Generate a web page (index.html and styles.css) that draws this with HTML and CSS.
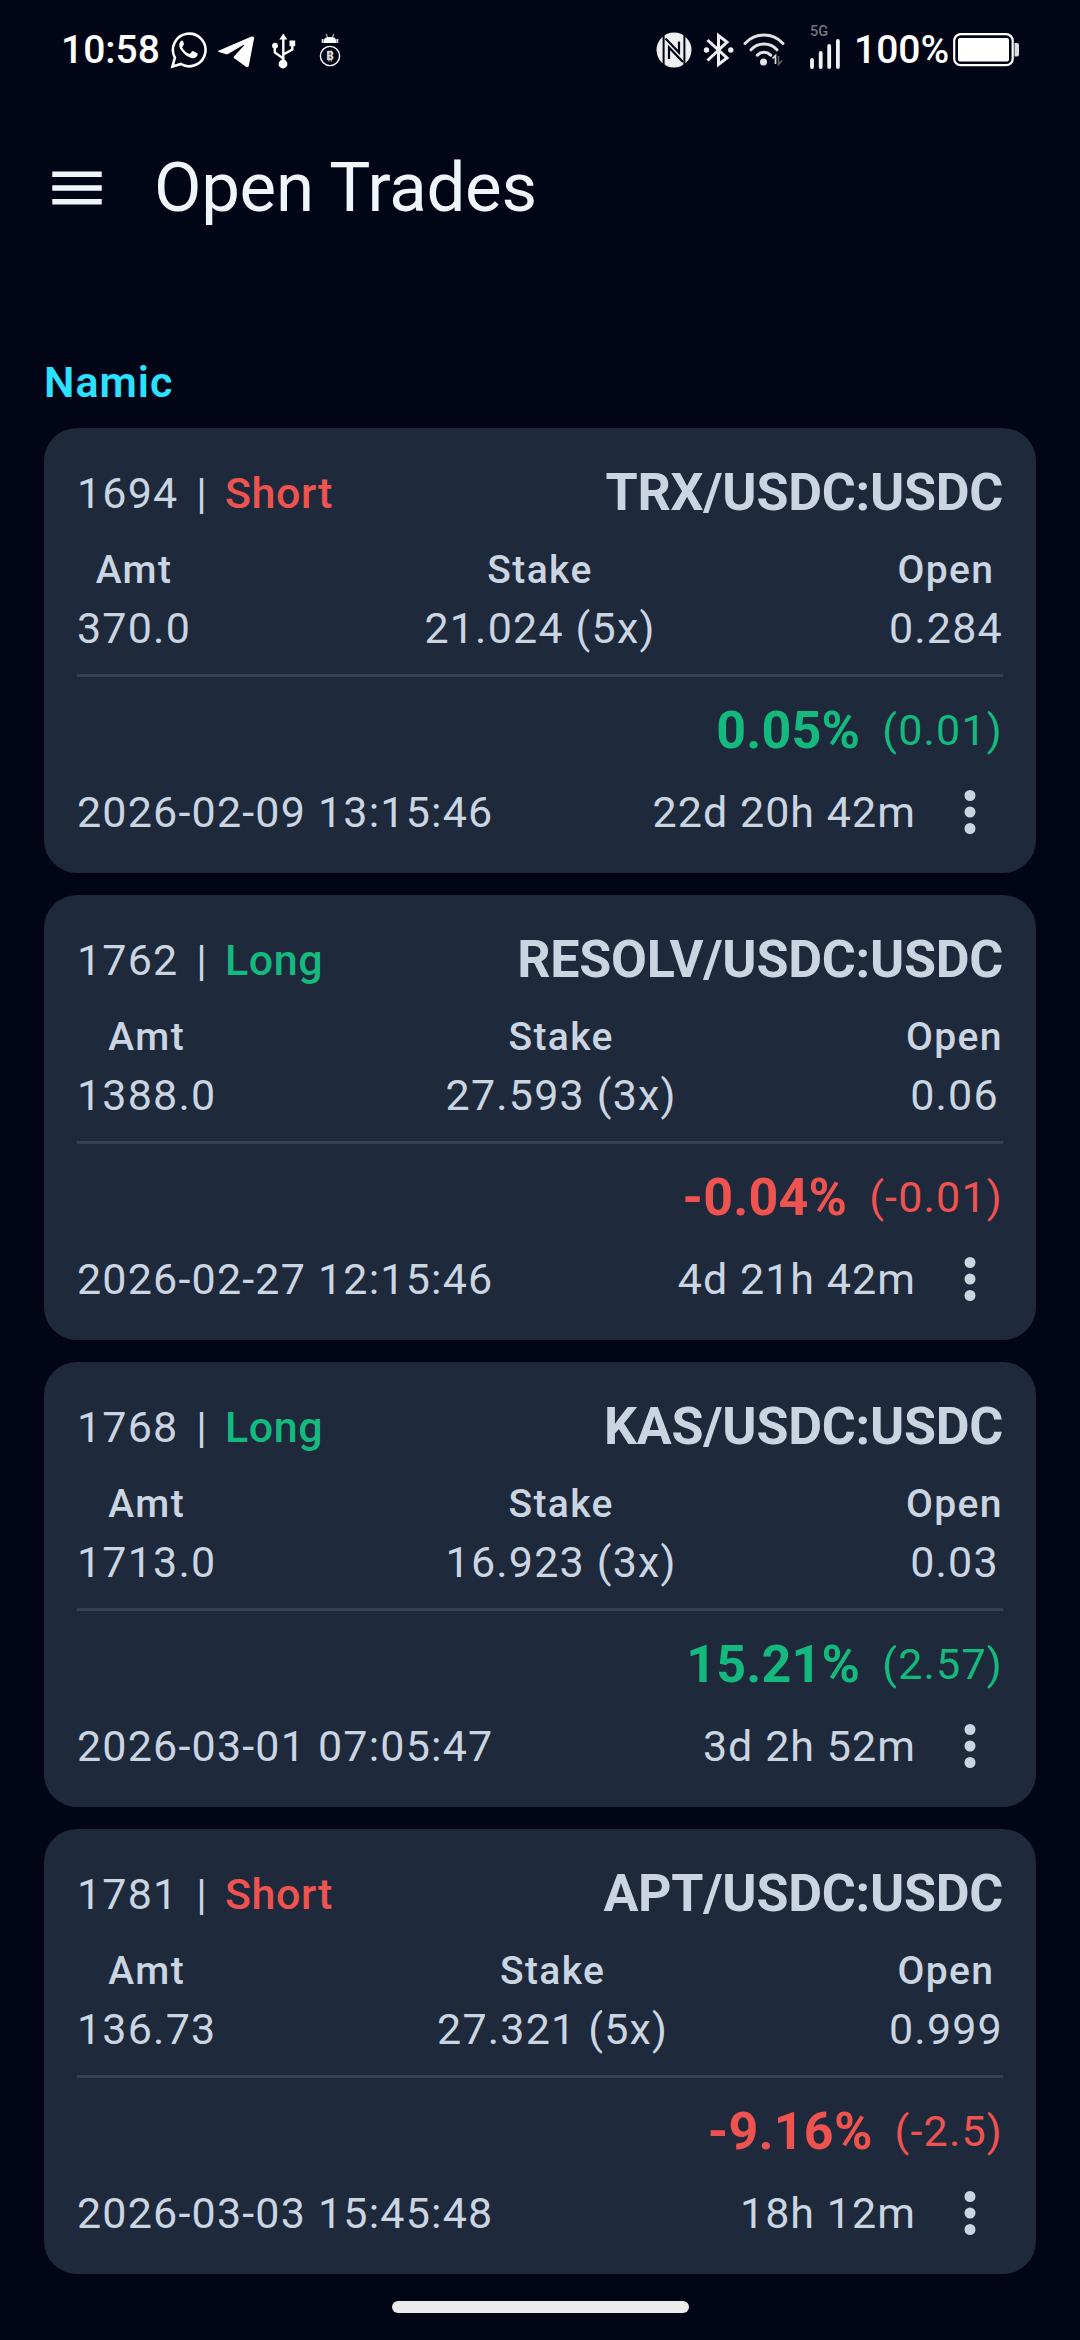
FILE: index.html
```html
<!DOCTYPE html>
<html lang="en">
<head>
    <meta charset="UTF-8">
    <meta name="viewport" content="width=device-width, initial-scale=1.0">
    <title>Open Trades</title>
    <link rel="stylesheet" href="styles.css">
</head>
<body>

    <div class="statusbar">
        <div class="status-left">
            <span class="clock">10:58</span>
            <!-- whatsapp -->
            <svg class="whatsapp" width="38" height="38" viewBox="0 0 38 38">
                <path d="M2.4 35.6l2.5-8.9A16.3 16.3 0 1 1 11 33z" fill="none" stroke="#fff" stroke-width="2.6"/>
                <path d="M13.2 10.2c-.6-1-1.6-.9-2.4 0-2.6 2.8-1.6 6.3.6 9.4 2.6 3.7 5.9 6.3 9.9 7.4 3.2.9 6.3-1 6.4-3.7 0-.8-.3-1-1-1.4l-3.3-1.6c-.8-.4-1.2-.2-1.7.5l-1.3 1.6c-.4.5-.8.5-1.4.3-3-1.3-5.1-3.3-6.6-6-.3-.6-.2-.9.2-1.3l1-1.3c.4-.5.4-.9.2-1.4z" fill="#fff"/>
            </svg>
            <!-- telegram -->
            <svg class="telegram" width="38" height="34" viewBox="0 0 38 34">
                <path d="M1.5 15.8L34.5 1.6c1.7-.6 2.8.2 2.5 2l-5 26.5c-.4 2.1-1.7 2.6-3.4 1.4L17.3 23.2c-.9-.6-.8-1.3-.1-2L27 10.6c.5-.6 0-.9-.7-.5L11 18.9c-.8.5-1.7.5-2.6.2l-6.5-2c-1.1-.3-1.1-.9-.4-1.3z" fill="#fff"/>
            </svg>
            <!-- usb -->
            <svg class="usb" width="24" height="36" viewBox="0 0 24 36">
                <path d="M11.3 30V6M11.3 25.5L2.8 19.5V12M11.3 21.5l9-5V10" fill="none" stroke="#fff" stroke-width="2.4"/>
                <path d="M11.3 .5l4 6h-8z" fill="#fff"/>
                <circle cx="11" cy="31" r="4.4" fill="#fff"/>
                <circle cx="3" cy="12.7" r="2.9" fill="#fff"/>
                <rect x="17.5" y="7.5" width="5.7" height="5.7" fill="#fff"/>
            </svg>
            <!-- trading bot -->
            <svg class="bot" width="22" height="35" viewBox="0 0 22 35">
                <path d="M7 1l2 4M15 1l-2 4" stroke="#aaa" stroke-width="1.3"/>
                <path d="M5 10V7.5C5 5 7 4 11 4s6 1 6 3.5V10z" fill="#fff"/>
                <path d="M3.7 6v4M18.3 6v4" stroke="#ddd" stroke-width="2"/>
                <circle cx="11" cy="23" r="9.6" fill="none" stroke="#fff" stroke-width="1.4"/>
                <text class="bot-coin" x="11" y="27.3">B</text>
                <path d="M10 17.5v11M12.2 17.5v11" stroke="#ddd" stroke-width="1"/>
            </svg>
        </div>
        <div class="status-right">
            <!-- nfc -->
            <svg class="nfc" width="36" height="36" viewBox="0 0 36 36">
                <circle cx="18" cy="18" r="17.5" fill="#f0f0f0"/>
                <path d="M7.6 3v30M28.4 3v30" stroke="#020515" stroke-width="2"/>
                <path d="M9.5 6.5L23 20.5V9.5M13 27V15.5L27 30" fill="none" stroke="#020515" stroke-width="2.2"/>
            </svg>
            <!-- bluetooth -->
            <svg class="bluetooth" width="32" height="36" viewBox="0 0 32 36">
                <path d="M4.5 8L24 26 15.5 32.5V3.5L24 10 4.5 28.5" fill="none" stroke="#f0f0f0" stroke-width="3"/>
                <circle cx="3.5" cy="18" r="2.7" fill="#f0f0f0"/>
                <circle cx="27.8" cy="18" r="2.7" fill="#f0f0f0"/>
            </svg>
            <!-- wifi -->
            <svg class="wifi" width="42" height="36" viewBox="0 0 42 36">
                <path d="M2 11.5C12.5.3 29.5.3 40 11.5M8 17.8c7-7.6 19-7.6 26 0M14.3 23.2c4-3.8 9.4-3.8 13.4 0" fill="none" stroke="#e3e3e3" stroke-width="3" stroke-linecap="round"/>
                <circle cx="20.5" cy="30" r="3.5" fill="#e3e3e3"/>
                <path d="M29.5 26.5l3-3V32" fill="none" stroke="#ddd" stroke-width="1.7"/>
                <path d="M35.5 24v8.5l3.5-4" fill="none" stroke="#666" stroke-width="1.5"/>
            </svg>
            <!-- mobile signal -->
            <div class="signal">
                <span class="network">5G</span>
                <svg width="30" height="30" viewBox="0 0 30 30">
                    <path d="M2 28v-7M10.7 28V14M19.2 28V7M27.9 28V2" stroke="#f2f2f2" stroke-width="3.8" stroke-linecap="round"/>
                </svg>
            </div>
            <span class="percent">100%</span>
            <svg class="battery" width="67" height="34" viewBox="0 0 67 34">
                <rect x="1.2" y="1.2" width="58.5" height="31" rx="6.5" fill="none" stroke="#fff" stroke-width="2.2"/>
                <rect x="5" y="5" width="51" height="23.5" rx="2" fill="#fff"/>
                <path d="M61.5 10h2.5q2 0 2 2v9.5q0 2-2 2h-2.5z" fill="#ddd"/>
            </svg>
        </div>
    </div>

    <div class="toolbar">
        <svg class="menu-icon" width="66" height="66" viewBox="0 0 24 24">
            <path d="M3 18h18v-2H3v2zm0-5h18v-2H3v2zm0-7v2h18V6H3z" fill="#f1f5f9"/>
        </svg>
        <h1>Open Trades</h1>
    </div>

    <div class="trades">
        <h2>Namic</h2>

        <div class="card">
            <div class="card-head">
                <div class="ident">1694 <span class="bar">|</span> <span class="side loss">Short</span></div>
                <div class="pair">TRX/USDC:USDC</div>
            </div>
            <div class="figures">
                <div class="figure"><b>Amt</b><span>370.0</span></div>
                <div class="figure"><b>Stake</b><span>21.024 (5x)</span></div>
                <div class="figure"><b>Open</b><span>0.284</span></div>
            </div>
            <div class="profit gain"><b>0.05%</b><span>(0.01)</span></div>
            <div class="card-foot">
                <span class="date">2026-02-09 13:15:46</span>
                <span class="age">22d 20h 42m</span>
                <svg class="more" width="66" height="66" viewBox="0 0 24 24"><path d="M12 8a2 2 0 1 0 0-4 2 2 0 0 0 0 4zm0 2a2 2 0 1 0 0 4 2 2 0 0 0 0-4zm0 6a2 2 0 1 0 0 4 2 2 0 0 0 0-4z"/></svg>
            </div>
        </div>

        <div class="card">
            <div class="card-head">
                <div class="ident">1762 <span class="bar">|</span> <span class="side gain">Long</span></div>
                <div class="pair">RESOLV/USDC:USDC</div>
            </div>
            <div class="figures">
                <div class="figure"><b>Amt</b><span>1388.0</span></div>
                <div class="figure"><b>Stake</b><span>27.593 (3x)</span></div>
                <div class="figure"><b>Open</b><span>0.06</span></div>
            </div>
            <div class="profit loss"><b>-0.04%</b><span>(-0.01)</span></div>
            <div class="card-foot">
                <span class="date">2026-02-27 12:15:46</span>
                <span class="age">4d 21h 42m</span>
                <svg class="more" width="66" height="66" viewBox="0 0 24 24"><path d="M12 8a2 2 0 1 0 0-4 2 2 0 0 0 0 4zm0 2a2 2 0 1 0 0 4 2 2 0 0 0 0-4zm0 6a2 2 0 1 0 0 4 2 2 0 0 0 0-4z"/></svg>
            </div>
        </div>

        <div class="card">
            <div class="card-head">
                <div class="ident">1768 <span class="bar">|</span> <span class="side gain">Long</span></div>
                <div class="pair">KAS/USDC:USDC</div>
            </div>
            <div class="figures">
                <div class="figure"><b>Amt</b><span>1713.0</span></div>
                <div class="figure"><b>Stake</b><span>16.923 (3x)</span></div>
                <div class="figure"><b>Open</b><span>0.03</span></div>
            </div>
            <div class="profit gain"><b>15.21%</b><span>(2.57)</span></div>
            <div class="card-foot">
                <span class="date">2026-03-01 07:05:47</span>
                <span class="age">3d 2h 52m</span>
                <svg class="more" width="66" height="66" viewBox="0 0 24 24"><path d="M12 8a2 2 0 1 0 0-4 2 2 0 0 0 0 4zm0 2a2 2 0 1 0 0 4 2 2 0 0 0 0-4zm0 6a2 2 0 1 0 0 4 2 2 0 0 0 0-4z"/></svg>
            </div>
        </div>

        <div class="card">
            <div class="card-head">
                <div class="ident">1781 <span class="bar">|</span> <span class="side loss">Short</span></div>
                <div class="pair">APT/USDC:USDC</div>
            </div>
            <div class="figures">
                <div class="figure"><b>Amt</b><span>136.73</span></div>
                <div class="figure"><b>Stake</b><span>27.321 (5x)</span></div>
                <div class="figure"><b>Open</b><span>0.999</span></div>
            </div>
            <div class="profit loss"><b>-9.16%</b><span>(-2.5)</span></div>
            <div class="card-foot">
                <span class="date">2026-03-03 15:45:48</span>
                <span class="age">18h 12m</span>
                <svg class="more" width="66" height="66" viewBox="0 0 24 24"><path d="M12 8a2 2 0 1 0 0-4 2 2 0 0 0 0 4zm0 2a2 2 0 1 0 0 4 2 2 0 0 0 0-4zm0 6a2 2 0 1 0 0 4 2 2 0 0 0 0-4z"/></svg>
            </div>
        </div>
    </div>

    <div class="navbar">
        <div class="home-handle"></div>
    </div>

</body>
</html>
```
FILE: styles.css
```css
* {
    box-sizing: border-box;
}

body {
    margin: 0;
    width: 1080px;
    height: 2340px;
    overflow: hidden;
    display: flex;
    flex-direction: column;
    background-color: #020515;
    color: #cbd5e1;
    font-family: Roboto, sans-serif;
    font-size: 43px;
    letter-spacing: 1.2px;
    white-space: nowrap;
}

svg {
    display: block;
    flex: none;
}

h1, h2 {
    margin: 0;
}

/* status bar */
.statusbar {
    height: 100px;
    padding: 0 60px 0 61px;
    display: flex;
    justify-content: space-between;
    align-items: center;
    color: white;
    font-size: 39px;
    font-weight: 500;
    letter-spacing: 0;
}

.status-left, .status-right {
    display: flex;
    align-items: center;
}

.clock {
    width: 109px;
}

.telegram {
    margin: 3px 0 0 9px;
}

.usb {
    margin: 2px 0 0 17px;
}

.bot {
    margin: 1px 0 0 23px;
}

.bot-coin {
    fill: #ddd;
    font-size: 12px;
    font-weight: 700;
    text-anchor: middle;
}

.bluetooth {
    margin-left: 11px;
}

.wifi {
    margin-left: 8px;
}

.signal {
    margin-left: 25px;
    width: 30px;
    height: 43px;
    margin-top: -5px;
    display: flex;
    flex-direction: column;
    justify-content: space-between;
}

.network {
    height: 12px;
    color: #73757f;
    font-size: 14.5px;
    line-height: 12px;
}

.percent {
    margin-left: 14px;
    width: 99px;
}

/* title */
.toolbar {
    height: 175px;
    padding: 0 44px;
    display: flex;
    align-items: center;
}

.toolbar h1 {
    margin-left: 44px;
    color: #f1f5f9;
    font-size: 69px;
    font-weight: 400;
    letter-spacing: -0.3px;
}

/* trade list */
.trades {
    padding: 78px 44px 0;
    display: flex;
    flex-direction: column;
    gap: 22px;
}

.trades h2 {
    height: 53px;
    color: #2ce0ff;
    font-size: 43px;
    font-weight: 600;
    line-height: 59px;
    letter-spacing: 1px;
}

.card {
    height: 445px;
    padding: 33px;
    border-radius: 33px;
    background-color: #1e293b;
}

.card-head {
    height: 62px;
    display: flex;
    justify-content: space-between;
    align-items: center;
}

.ident {
    padding-top: 1px;
}

.bar {
    margin: 0 5px 0 6px;
}

.side {
    font-weight: 500;
    letter-spacing: 0.6px;
}

.pair {
    font-size: 52px;
    font-weight: 700;
    letter-spacing: -0.25px;
}

.gain {
    color: #14b97d;
}

.loss {
    color: #ef5350;
}

.figures {
    margin-top: 18px;
    padding-bottom: 17px;
    border-bottom: 3px solid #334155;
    display: flex;
    justify-content: space-between;
}

.figure {
    display: flex;
    flex-direction: column;
    align-items: center;
    line-height: 58px;
}

.figure b {
    font-size: 39px;
    font-weight: 500;
    letter-spacing: 1.4px;
}

.profit {
    height: 66px;
    margin-top: 20px;
    display: flex;
    justify-content: flex-end;
    align-items: center;
    gap: 22px;
}

.profit b {
    font-size: 52px;
    letter-spacing: 0.2px;
}

.card-foot {
    height: 66px;
    margin-top: 16px;
    display: flex;
    align-items: center;
}

.age {
    margin-left: auto;
    margin-right: 21px;
    letter-spacing: 1.05px;
}

.more {
    fill: #cbd5e1;
}

/* gesture bar */
.navbar {
    padding-top: 27px;
    display: flex;
    justify-content: center;
}

.home-handle {
    width: 297px;
    height: 12px;
    border-radius: 6px;
    background-color: #ebebeb;
}
```
